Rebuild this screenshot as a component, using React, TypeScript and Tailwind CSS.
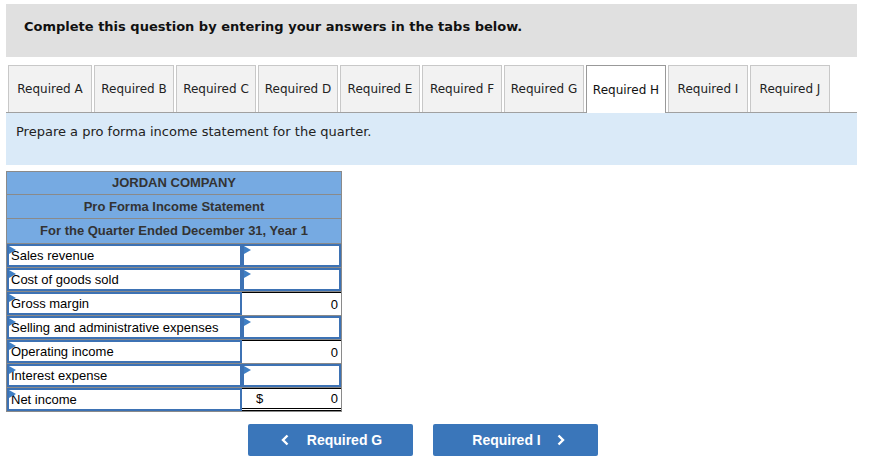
import React from "react";

const tabs = ["A", "B", "C", "D", "E", "F", "G", "H", "I", "J"];

const rows: { label: string; input: boolean; value?: string; dollar?: boolean; double?: boolean }[] = [
  { label: "Sales revenue", input: true },
  { label: "Cost of goods sold", input: true },
  { label: "Gross margin", input: false, value: "0" },
  { label: "Selling and administrative expenses", input: true },
  { label: "Operating income", input: false, value: "0" },
  { label: "Interest expense", input: true },
  { label: "Net income", input: false, value: "0", dollar: true, double: true },
];

function Flag() {
  return (
    <svg className="absolute left-0 top-0" width="7" height="8" viewBox="0 0 7 8">
      <polygon points="0,0 7,4 0,8" fill="#3f7fc4" />
    </svg>
  );
}

export default function App() {
  return (
    <div className="w-[869px] h-[465px] bg-white pt-[4px] pl-[6px]">
      <div className="w-[851px] h-[53px] bg-[#e0e0e0] flex items-center pl-[18px] pb-[7px] font-['DejaVu_Sans',sans-serif] font-bold text-[13px] text-[#111]">
        Complete this question by entering your answers in the tabs below.
      </div>
      <div className="mt-[8px] w-[851px] flex items-end pl-[2px] gap-[2px] border-b border-[#a0a0a0] font-['DejaVu_Sans',sans-serif] text-[12px] text-[#222] whitespace-nowrap">
        {tabs.map((t) => {
          const active = t === "H";
          const w = t === "A" ? "w-[84px]" : "w-[80px]";
          return (
            <div
              key={t}
              className={
                active
                  ? `${w} shrink-0 h-[48px] -mb-px flex items-center justify-center bg-white border border-b-0 border-[#999] text-[#111]`
                  : `${w} shrink-0 h-[47px] flex items-center justify-center bg-[#f2f2f2] border border-b-0 border-[#c8c8c8]`
              }
            >
              Required {t}
            </div>
          );
        })}
      </div>
      <div className="w-[851px] h-[52px] bg-[#daeaf8] pl-[10px] pt-[9px] font-['DejaVu_Sans',sans-serif] text-[13px] text-[#222]">
        Prepare a pro forma income statement for the quarter.
      </div>
      <div className="mt-[6px] w-[336px] border border-[#8a8a8a] bg-[#8a9bb0] font-['Liberation_Sans',Arial,sans-serif] text-[13px] text-[#222]">
        <div className="h-[23px] bg-[#76aae2] flex items-center justify-center font-bold text-[#333] border-b border-[#8a8a8a]">JORDAN COMPANY</div>
        <div className="h-[24px] bg-[#76aae2] flex items-center justify-center font-bold text-[#333] border-b border-[#8a8a8a]">Pro Forma Income Statement</div>
        <div className="h-[24px] bg-[#76aae2] flex items-center justify-center font-bold text-[#333]">For the Quarter Ended December 31, Year 1</div>
        {rows.map((r, i) => (
          <div key={i} className="flex h-[24px] bg-white border-t border-[#8a8a8a]">
            <div className="relative w-[235px] h-full border-2 border-[#3d72b4] flex items-center pl-[2px] pt-[1px] text-black">
              <Flag />
              {r.label}
            </div>
            <div
              className={
                r.input
                  ? "relative flex-1 h-full border-2 border-[#3d72b4] bg-white"
                  : "relative flex-1 h-full flex items-center justify-between pl-[14px] pr-[3px] pt-[1px] bg-white text-black border-t border-black " +
                    (r.double ? "border-b-[3px] border-b-black border-double" : "")
              }
            >
              {r.input ? <Flag /> : null}
              {!r.input && <span>{r.dollar ? "$" : ""}</span>}
              {!r.input && <span>{r.value}</span>}
            </div>
          </div>
        ))}
      </div>
      <div className="mt-[12px] flex pl-[242px] gap-[20px] font-['Liberation_Sans',Arial,sans-serif] font-bold text-[14px] text-white">
        <div className="w-[165px] h-[32px] rounded-[2px] bg-[#3a76ba] flex items-center justify-center gap-[18px] pl-[2px]">
          <svg width="8" height="12" viewBox="0 0 8 12"><path d="M6.5 1.5 L2 6 L6.5 10.5" fill="none" stroke="white" strokeWidth="2.4" /></svg>
          <span>Required G</span>
        </div>
        <div className="w-[165px] h-[32px] rounded-[2px] bg-[#3a76ba] flex items-center justify-center gap-[16px] pl-[6px]">
          <span>Required I</span>
          <svg width="8" height="12" viewBox="0 0 8 12"><path d="M1.5 1.5 L6 6 L1.5 10.5" fill="none" stroke="white" strokeWidth="2.4" /></svg>
        </div>
      </div>
    </div>
  );
}
